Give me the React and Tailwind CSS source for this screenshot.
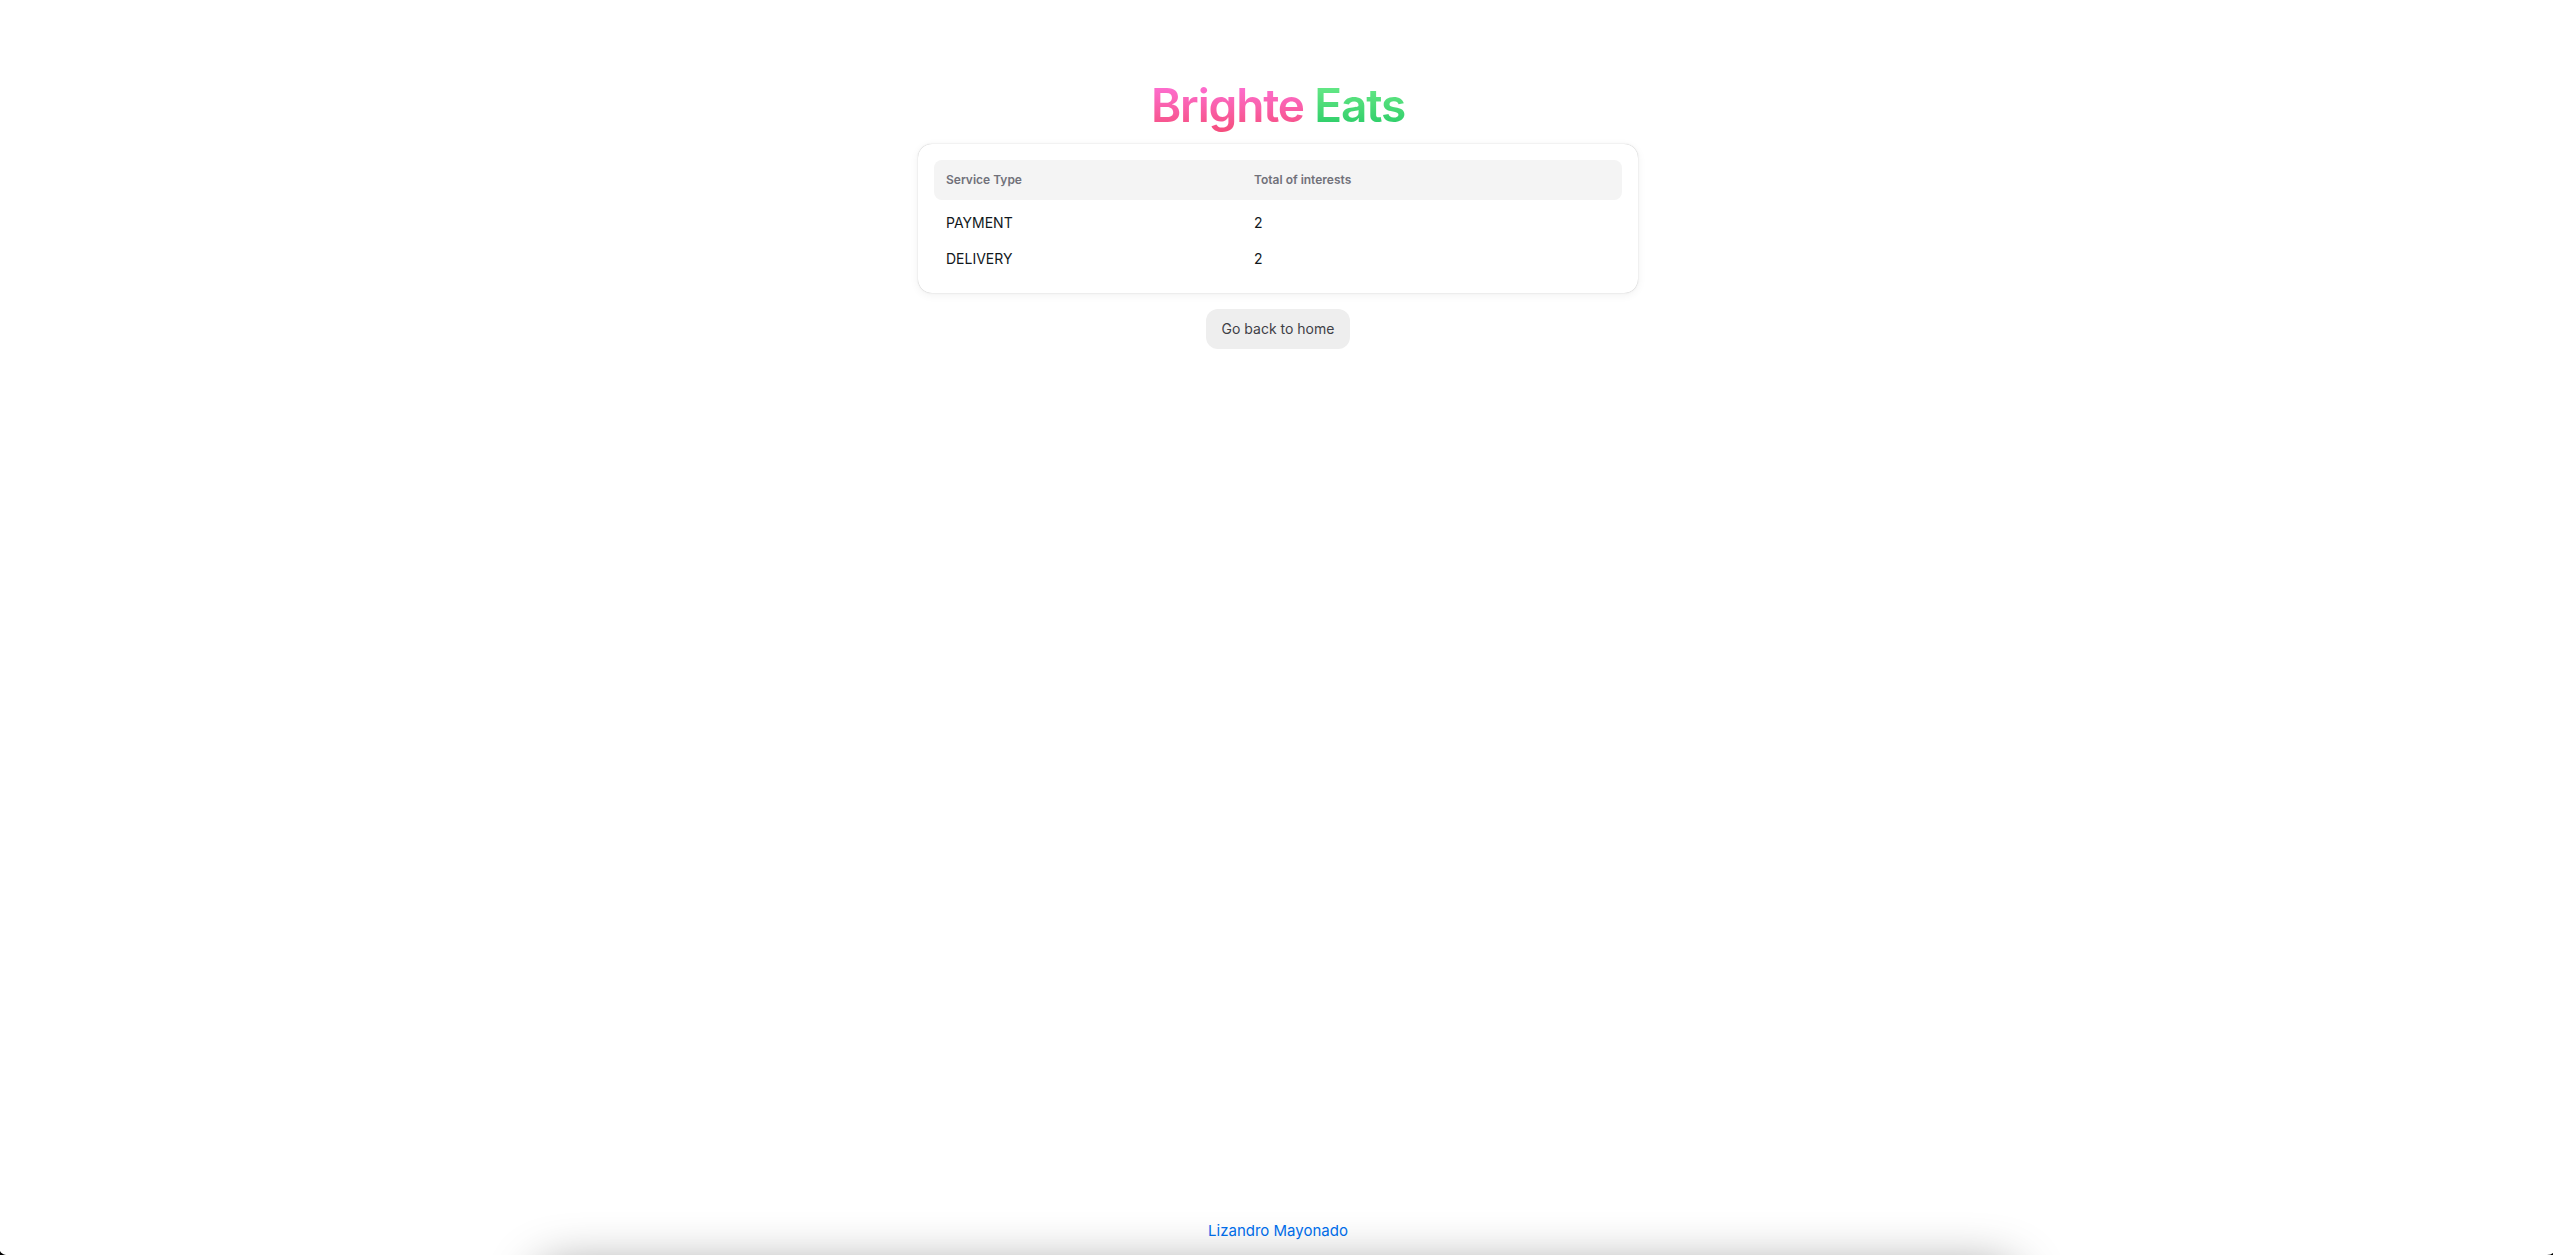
const services = [
  { type: "PAYMENT", total: 2 },
  { type: "DELIVERY", total: 2 },
];

function Title() {
  return (
    <h1 className="text-[46px] leading-[46px] font-semibold tracking-tight">
      <span className="bg-linear-to-b from-[#FF72E1] to-[#F54C7A] bg-clip-text text-transparent">Brighte </span>
      <span className="bg-linear-to-b from-[#6FEE8D] to-[#17c964] bg-clip-text text-transparent">Eats</span>
    </h1>
  );
}

function ServicesTable() {
  return (
    <div className="w-full max-w-[720px] rounded-[14px] bg-white p-4 shadow-[0_0_5px_0_rgb(0_0_0/0.02),0_2px_10px_0_rgb(0_0_0/0.06),0_0_1px_0_rgb(0_0_0/0.3)]">
      <table className="w-full table-fixed border-separate border-spacing-0 text-left text-sm">
        <thead className="text-xs text-[#71717a]">
          <tr>
            <th scope="col" className="h-10 w-77 rounded-l-lg bg-[#f4f4f4] px-3 font-semibold">Service Type</th>
            <th scope="col" className="h-10 rounded-r-lg bg-[#f4f4f4] px-3 font-semibold">Total of interests</th>
          </tr>
        </thead>
        <tbody className="text-[#11181c] before:block before:h-[5px]">
          {services.map((s) => (
            <tr key={s.type}>
              <td className="px-3 py-2">{s.type}</td>
              <td className="px-3 py-2">{s.total}</td>
            </tr>
          ))}
        </tbody>
      </table>
    </div>
  );
}

export default function App() {
  return (
    <div className="relative flex min-h-screen flex-col overflow-hidden bg-white pl-[3px] font-['Inter','Liberation_Sans',sans-serif] text-[#11181c]">
      <main className="flex flex-1 flex-col items-center gap-4 px-6 pt-[82px]">
        <Title />
        <ServicesTable />
        <button type="button" className="h-10 rounded-xl bg-[#eeeeee] px-4 text-sm text-[#3f3f46]">
          Go back to home
        </button>
      </main>
      <footer className="flex justify-center py-3">
        <a href="#author" className="text-[15px] leading-6 text-[#006fee]">Lizandro Mayonado</a>
      </footer>
      <div aria-hidden="true" className="pointer-events-none absolute top-full left-1/2 h-40 w-[58%] -translate-x-1/2 translate-y-3 rounded-3xl shadow-[0_0_50px_rgb(0_0_0/0.42)]" />
      <svg aria-hidden="true" viewBox="0 0 6 4" className="absolute bottom-0 left-0 h-1 w-1.5">
        <path d="M0 0 Q1.5 3 6 4 H0Z" fill="#000" />
      </svg>
      <svg aria-hidden="true" viewBox="0 0 6 2" className="absolute right-0 bottom-0 h-0.5 w-1.5">
        <path d="M6 0 Q4 2 0 2 H6Z" fill="#000" />
      </svg>
    </div>
  );
}
